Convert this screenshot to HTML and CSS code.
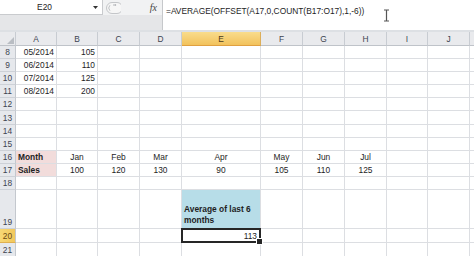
FILE: index.html
```html
<!DOCTYPE html>
<html>
<head>
<meta charset="utf-8">
<link rel="stylesheet" href="styles.css">
</head>
<body>
<div class="top">
  <div class="left">
    <div class="bar">
      <div class="namebox">
        <span class="val">E20</span>
        <svg class="arrow" width="13" height="15" viewBox="0 0 13 15"><path d="M4 6 L9 6 L6.5 9 Z" fill="#333"/></svg>
      </div>
      <svg class="btn" width="16" height="14" viewBox="0 0 16 14"><path d="M7 1.5 H12 A5.5 5.5 0 0 1 12 12.5 H7 A5.5 5.5 0 0 1 7 1.5 Z" fill="#f6f6f6" stroke="#c4c6c9"/><path d="M5 4.2 A4 4 0 0 0 5 9.8" fill="none" stroke="#b9bcc0" stroke-width="0.9"/><circle cx="9" cy="4" r="0.7" fill="#9a9da2"/><circle cx="10.5" cy="4" r="0.7" fill="#9a9da2"/></svg>
      <span class="fx">fx</span>
    </div>
    <div class="below"></div>
  </div>
  <div class="formula">
    <span class="ftext">=AVERAGE(OFFSET(A17,0,COUNT(B17:O17),1,-6))</span>
    <svg class="ibeam" width="7" height="13" viewBox="0 0 7 13"><path d="M1 1 H6 M3.5 1 V12 M1 12 H6" fill="none" stroke="#555" stroke-width="1.2"/></svg>
  </div>
</div>
<div class="sheet">
  <div class="h corner"><svg width="7" height="7" viewBox="0 0 7 7"><path d="M7 0 V7 H0 Z" fill="#b9bdc3"/></svg></div>
  <div class="h">A</div><div class="h">B</div><div class="h">C</div><div class="h">D</div><div class="h hsel">E</div><div class="h">F</div><div class="h">G</div><div class="h">H</div><div class="h">I</div><div class="h">J</div><div class="h"></div>

  <div class="r">8</div><div class="c n">05/2014</div><div class="c n">105</div><div class="c"></div><div class="c"></div><div class="c"></div><div class="c"></div><div class="c"></div><div class="c"></div><div class="c"></div><div class="c"></div><div class="c"></div>
  <div class="r">9</div><div class="c n">06/2014</div><div class="c n">110</div><div class="c"></div><div class="c"></div><div class="c"></div><div class="c"></div><div class="c"></div><div class="c"></div><div class="c"></div><div class="c"></div><div class="c"></div>
  <div class="r">10</div><div class="c n">07/2014</div><div class="c n">125</div><div class="c"></div><div class="c"></div><div class="c"></div><div class="c"></div><div class="c"></div><div class="c"></div><div class="c"></div><div class="c"></div><div class="c"></div>
  <div class="r">11</div><div class="c n">08/2014</div><div class="c n">200</div><div class="c"></div><div class="c"></div><div class="c"></div><div class="c"></div><div class="c"></div><div class="c"></div><div class="c"></div><div class="c"></div><div class="c"></div>
  <div class="r">12</div><div class="c"></div><div class="c"></div><div class="c"></div><div class="c"></div><div class="c"></div><div class="c"></div><div class="c"></div><div class="c"></div><div class="c"></div><div class="c"></div><div class="c"></div>
  <div class="r">13</div><div class="c"></div><div class="c"></div><div class="c"></div><div class="c"></div><div class="c"></div><div class="c"></div><div class="c"></div><div class="c"></div><div class="c"></div><div class="c"></div><div class="c"></div>
  <div class="r">14</div><div class="c"></div><div class="c"></div><div class="c"></div><div class="c"></div><div class="c"></div><div class="c"></div><div class="c"></div><div class="c"></div><div class="c"></div><div class="c"></div><div class="c"></div>
  <div class="r">15</div><div class="c"></div><div class="c"></div><div class="c"></div><div class="c"></div><div class="c"></div><div class="c"></div><div class="c"></div><div class="c"></div><div class="c"></div><div class="c"></div><div class="c"></div>
  <div class="r">16</div><div class="c b pink">Month</div><div class="c m">Jan</div><div class="c m">Feb</div><div class="c m">Mar</div><div class="c m">Apr</div><div class="c m">May</div><div class="c m">Jun</div><div class="c m">Jul</div><div class="c"></div><div class="c"></div><div class="c"></div>
  <div class="r">17</div><div class="c b pink">Sales</div><div class="c m">100</div><div class="c m">120</div><div class="c m">130</div><div class="c m">90</div><div class="c m">105</div><div class="c m">110</div><div class="c m">125</div><div class="c"></div><div class="c"></div><div class="c"></div>
  <div class="r">18</div><div class="c"></div><div class="c"></div><div class="c"></div><div class="c"></div><div class="c"></div><div class="c"></div><div class="c"></div><div class="c"></div><div class="c"></div><div class="c"></div><div class="c"></div>
  <div class="r">19</div><div class="c"></div><div class="c"></div><div class="c"></div><div class="c"></div><div class="c b blue wrap"><span>Average of last 6 months</span></div><div class="c"></div><div class="c"></div><div class="c"></div><div class="c"></div><div class="c"></div><div class="c"></div>
  <div class="r rsel">20</div><div class="c"></div><div class="c"></div><div class="c"></div><div class="c"></div><div class="c n sel">113</div><div class="c"></div><div class="c"></div><div class="c"></div><div class="c"></div><div class="c"></div><div class="c"></div>
  <div class="r">21</div><div class="c"></div><div class="c"></div><div class="c"></div><div class="c"></div><div class="c"></div><div class="c"></div><div class="c"></div><div class="c"></div><div class="c"></div><div class="c"></div><div class="c"></div>
</div>
</body>
</html>
```
FILE: styles.css
```css
* { box-sizing: border-box; margin: 0; padding: 0; }
body {
  width: 474px;
  height: 256px;
  overflow: hidden;
  background: #fff;
  font-family: "Liberation Sans", Arial, sans-serif;
  font-size: 8.4px;
  color: #1e1e1e;
}
.top {
  display: flex;
  height: 32px;
  border-bottom: 2px solid #dde0e4;
}
.left {
  width: 162px;
  display: flex;
  flex-direction: column;
  background: #e5e6e8;
}
.bar {
  height: 15px;
  display: flex;
  align-items: center;
  background: #f1f2f3;
}
.namebox {
  width: 103px;
  height: 15px;
  background: #fff;
  border-right: 1px solid #c9cbce;
  border-bottom: 1px solid #c9cbce;
  display: flex;
  align-items: center;
}
.namebox .val {
  flex: 1;
  text-align: center;
  color: #222;
}
.btn { margin-left: 2px; }
.fx {
  margin-left: auto;
  margin-right: 5px;
  font-family: "Liberation Serif", serif;
  font-style: italic;
  font-size: 10px;
  color: #444;
}
.below { flex: 1; }
.formula {
  flex: 1;
  position: relative;
  background: #fff;
  border-left: 1px solid #c6c8cb;
  padding: 6px 0 0 3px;
  line-height: 10px;
  color: #1e1e1e;
}
.ibeam {
  position: absolute;
  left: 220px;
  top: 9px;
}
.sheet {
  display: grid;
  grid-template-columns: 16px 41px 41px 42px 42px 79px 42px 42px 42px 41px 42px minmax(0, 1fr);
  grid-template-rows: 14px repeat(11, 13.1px) 39px 13.5px 14px;
  width: 474px;
  overflow: hidden;
}
.c, .h, .r {
  display: flex;
  align-items: flex-end;
  padding: 0 2px;
  line-height: 12px;
  white-space: nowrap;
  overflow: hidden;
  border-right: 1px solid #dcdee2;
  border-bottom: 1px solid #dcdee2;
}
.h {
  background: #e9eaed;
  border-right-color: #c8ccd2;
  border-bottom-color: #bfc3c9;
  justify-content: center;
  align-items: center;
  color: #3d4450;
}
.corner {
  justify-content: flex-end;
  align-items: flex-end;
  padding: 0 1px 1px 0;
}
.hsel {
  background: linear-gradient(#f9dc8c, #f2c25c);
  border-right-color: #dcae5a;
  border-bottom-color: #e0a040;
  color: #4a3a1a;
}
.r {
  background: #e6e8ec;
  border-right-color: #c4c8ce;
  border-bottom-color: #cdd1d7;
  justify-content: center;
  color: #3d4450;
  padding: 0;
}
.rsel {
  background: linear-gradient(90deg, #f7d774, #f2c85c);
  color: #6a4a12;
  border-bottom-color: #e0b050;
}
.n { justify-content: flex-end; }
.m { justify-content: center; }
.b { font-weight: bold; }
.pink { background: #f2dcdb; }
.blue { background: #b7dde8; }
.wrap { white-space: normal; padding-bottom: 1px; }
.wrap span { line-height: 11.6px; }
.sel {
  position: relative;
  z-index: 1;
  overflow: visible;
  padding-right: 3px;
}
.sel::before {
  content: "";
  position: absolute;
  left: -1px;
  top: -1px;
  right: -1px;
  bottom: -1px;
  border: 2px solid #262626;
}
.sel::after {
  content: "";
  position: absolute;
  right: -3px;
  bottom: -3px;
  width: 5px;
  height: 5px;
  background: #262626;
  border: 1px solid #fff;
}
```
